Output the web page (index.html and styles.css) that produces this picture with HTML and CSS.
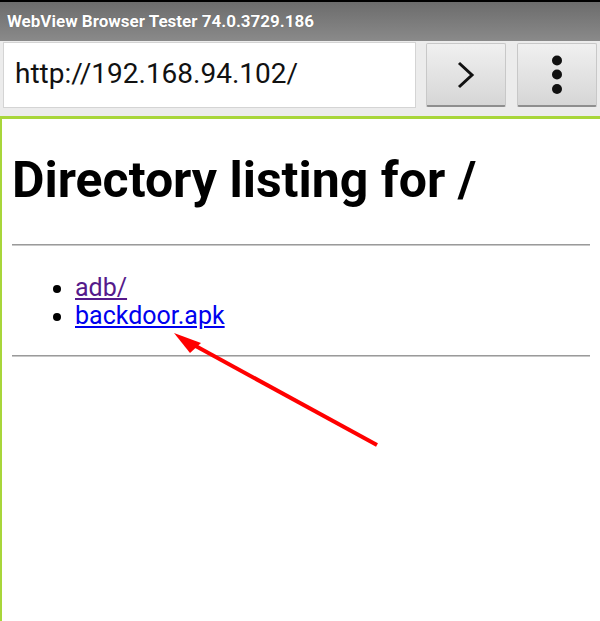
FILE: index.html
```html
<!DOCTYPE html>
<html>
<head>
<meta charset="utf-8">
<link rel="stylesheet" href="styles.css">
</head>
<body>
<div class="app">
  <div class="titlebar">WebView Browser Tester 74.0.3729.186</div>
  <div class="toolbar">
    <div class="urlbox">http://192.168.94.102/</div>
    <div class="btn">
      <svg width="20" height="28" viewBox="0 0 20 28"><path d="M3 2 L16 14 L3 26" fill="none" stroke="#111" stroke-width="3"/></svg>
    </div>
    <div class="btn btn-menu">
      <svg width="12" height="40" viewBox="0 0 12 40"><circle cx="6" cy="5.5" r="5" fill="#111"/><circle cx="6" cy="19.5" r="5" fill="#111"/><circle cx="6" cy="34" r="5" fill="#111"/></svg>
    </div>
  </div>
  <div class="webview">
    <h1 class="heading">Directory listing for /</h1>
    <hr class="rule">
    <ul class="listing">
      <li><a class="visited" href="#">adb/</a></li>
      <li><a class="link" href="#">backdoor.apk</a></li>
    </ul>
    <hr class="rule rule2">
    <svg class="arrow" width="600" height="500" viewBox="0 0 600 500">
      <line x1="377" y1="326" x2="192" y2="225" stroke="#ff0000" stroke-width="4"/>
      <polygon points="174,214 201,224 190,234" fill="#ff0000"/>
    </svg>
  </div>
</div>
</body>
</html>
```
FILE: styles.css
```css
html, body {
  margin: 0;
  padding: 0;
  background: #fff;
}
.app {
  width: 600px;
  height: 621px;
  display: flex;
  flex-direction: column;
  overflow: hidden;
  font-family: Roboto, "Liberation Sans", sans-serif;
}
.titlebar {
  height: 39px;
  flex: none;
  border-top: 2px solid #000;
  background: linear-gradient(#6c6c6c, #8a8a8a);
  color: #fff;
  font-weight: bold;
  font-size: 17px;
  line-height: 38px;
  padding-left: 7px;
  white-space: nowrap;
  text-shadow: 0 0 1px rgba(0,0,0,0.3);
}
.toolbar {
  height: 75px;
  flex: none;
  background: #ececec;
  display: flex;
  align-items: flex-start;
  padding-top: 1px;
  box-sizing: border-box;
}
.urlbox {
  margin-left: 3px;
  width: 413px;
  height: 66px;
  background: #fff;
  border: 1px solid #d4d4d4;
  box-sizing: border-box;
  font-size: 28px;
  color: #111;
  line-height: 62px;
  padding-left: 11px;
  white-space: nowrap;
}
.btn {
  margin-left: 10px;
  margin-top: 1px;
  width: 80px;
  height: 64px;
  box-sizing: border-box;
  background: linear-gradient(#f0f0f0, #d6d6d6);
  border: 1px solid #c8c8c8;
  border-bottom: 2px solid #8e8e8e;
  border-radius: 2px;
  display: flex;
  align-items: center;
  justify-content: center;
}
.btn-menu {
  margin-left: 11px;
}
.webview {
  flex: 1;
  position: relative;
  border-top: 3px solid #a8d63a;
  border-left: 2px solid #a8d63a;
  padding: 0 10px;
}
.heading {
  margin: 31px 0 0;
  font-size: 50px;
  font-weight: bold;
  line-height: 60px;
  color: #000;
  white-space: nowrap;
}
.rule {
  margin: 34px 0 0;
  border: 0;
  border-top: 1px solid #9a9a9a;
  border-bottom: 1px solid #c8c8c8;
  height: 0;
}
.listing {
  margin: 28px 0 0;
  padding-left: 63px;
  font-size: 25px;
  line-height: 28px;
}
.rule2 {
  margin-top: 25px;
}
.listing a {
  text-decoration: underline;
}
.visited { color: #551a8b; }
.link { color: #0000ee; }
.arrow {
  position: absolute;
  left: -2px;
  top: 0;
  pointer-events: none;
}
```
